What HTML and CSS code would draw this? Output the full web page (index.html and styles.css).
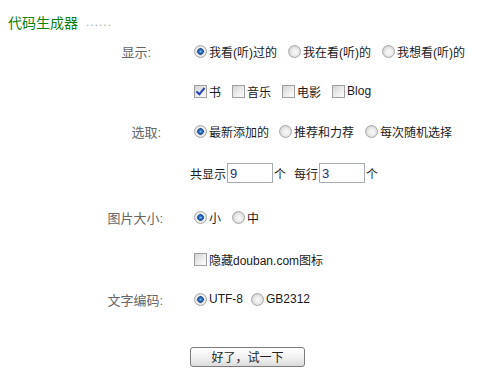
FILE: index.html
```html
<!DOCTYPE html>
<html lang="zh">
<head>
<meta charset="utf-8">
<title>代码生成器</title>
<link rel="stylesheet" href="styles.css">
</head>
<body>
<div class="title"><span class="t">代码生成器</span><span class="dots">......</span></div>
<form class="form">
  <div class="row h40">
    <div class="lab p12">显示:</div>
    <div class="opts">
      <label class="opt"><input type="radio" name="show" checked>我看(听)过的</label>
      <label class="opt"><input type="radio" name="show">我在看(听)的</label>
      <label class="opt"><input type="radio" name="show">我想看(听)的</label>
    </div>
  </div>
  <div class="row h40">
    <div class="lab"></div>
    <div class="opts">
      <label class="opt"><input type="checkbox" checked>书</label>
      <label class="opt"><input type="checkbox">音乐</label>
      <label class="opt"><input type="checkbox">电影</label>
      <label class="opt"><input type="checkbox">Blog</label>
    </div>
  </div>
  <div class="row h40">
    <div class="lab p2">选取:</div>
    <div class="opts">
      <label class="opt wide"><input type="radio" name="pick" checked>最新添加的</label>
      <label class="opt"><input type="radio" name="pick">推荐和力荐</label>
      <label class="opt"><input type="radio" name="pick">每次随机选择</label>
    </div>
  </div>
  <div class="row h44">
    <div class="lab"></div>
    <div class="opts">
      <span>共显示</span><input class="num" type="text" value="9"><span>个</span>
      <span class="sep">每行</span><input class="num" type="text" value="3"><span>个</span>
    </div>
  </div>
  <div class="row h44">
    <div class="lab">图片大小:</div>
    <div class="opts">
      <label class="opt wide2"><input type="radio" name="size" checked>小</label>
      <label class="opt"><input type="radio" name="size">中</label>
    </div>
  </div>
  <div class="row h40">
    <div class="lab"></div>
    <div class="opts">
      <label class="opt"><input type="checkbox">隐藏douban.com图标</label>
    </div>
  </div>
  <div class="row h40">
    <div class="lab">文字编码:</div>
    <div class="opts">
      <label class="opt narrow"><input type="radio" name="enc" checked>UTF-8</label>
      <label class="opt"><input type="radio" name="enc">GB2312</label>
    </div>
  </div>
  <div class="btnrow">
    <button type="button" class="btn">好了，试一下</button>
  </div>
</form>
</body>
</html>
```
FILE: styles.css
```css
html, body {
  margin: 0;
  padding: 0;
  background: #fff;
}
body {
  font-family: "Liberation Sans", "Noto Sans CJK SC", sans-serif;
  font-size: 12px;
  color: #1a1a1a;
}
.title {
  box-sizing: border-box;
  height: 31px;
  padding: 12px 0 0 8px;
  line-height: 16px;
  display: flex;
  align-items: center;
}
.title .t {
  font-size: 14px;
  color: #0b800b;
  font-family: "Noto Sans CJK SC", sans-serif;
}
.title .dots {
  margin-left: 8px;
  color: #aaa;
  font-size: 12px;
  letter-spacing: 1px;
}
.form {
  margin: 0;
}
.row {
  display: flex;
  align-items: center;
}
.h40 { height: 40px; }
.h44 { height: 44px; }
.lab {
  width: 163px;
  box-sizing: border-box;
  text-align: right;
  font-size: 13px;
  color: #666;
  flex: none;
}
.p12 { padding-right: 12px; }
.p2 { padding-right: 2px; }
.opts {
  margin-left: 27px;
  display: flex;
  align-items: center;
  white-space: nowrap;
}
.opt {
  display: inline-flex;
  align-items: center;
  margin-right: 7px;
}
.opt.wide { margin-right: 6px; }
.opt.wide2 { margin-right: 7px; }
.opt.narrow { margin-right: 4px; }
input[type="radio"],
input[type="checkbox"] {
  -webkit-appearance: none;
  appearance: none;
  box-sizing: border-box;
  width: 13px;
  height: 13px;
  margin: 0 2px 0 4px;
  flex: none;
  position: relative;
}
input[type="radio"] {
  border-radius: 50%;
  border: 1px solid #a8a8a8;
  background: radial-gradient(circle at 55% 55%, #fafafa 0, #eeeeee 3px, #d6d6d6 6px);
}
input[type="radio"]:checked {
  background: radial-gradient(circle at 50% 50%, #8fc4f5 0, #2c6fc2 1.5px, #1d4f98 3px, #d8d8d8 3.6px, #f4f4f4 4.5px, #d2d2d2 6px);
}
input[type="checkbox"] {
  border: 1px solid #a0a0a0;
  background: linear-gradient(135deg, #d2d2d2 0, #ebebeb 50%, #fdfdfd 100%);
}
input[type="checkbox"]:checked::after {
  content: "";
  position: absolute;
  left: 3px;
  top: 0px;
  width: 3px;
  height: 7px;
  border-right: 2px solid #2a44b8;
  border-bottom: 2px solid #2a44b8;
  transform: rotate(40deg);
}
.num {
  box-sizing: border-box;
  width: 46px;
  height: 20px;
  margin: 0 1px;
  padding: 0 2px;
  border: 1px solid #a5acb2;
  font-family: "Liberation Sans", sans-serif;
  font-size: 13px;
  color: #1e2a6e;
  outline: none;
}
.sep { margin-left: 8px; }
.btnrow {
  padding: 28px 0 0 190px;
}
.btn {
  box-sizing: border-box;
  width: 115px;
  height: 20px;
  padding: 0;
  border: 1px solid #7c7c7c;
  border-radius: 3px;
  background: linear-gradient(#ffffff 0, #f2f2f2 50%, #dcdcdc 100%);
  font-family: "Noto Sans CJK SC", sans-serif;
  font-size: 12px;
  color: #222;
  line-height: 18px;
}
```
